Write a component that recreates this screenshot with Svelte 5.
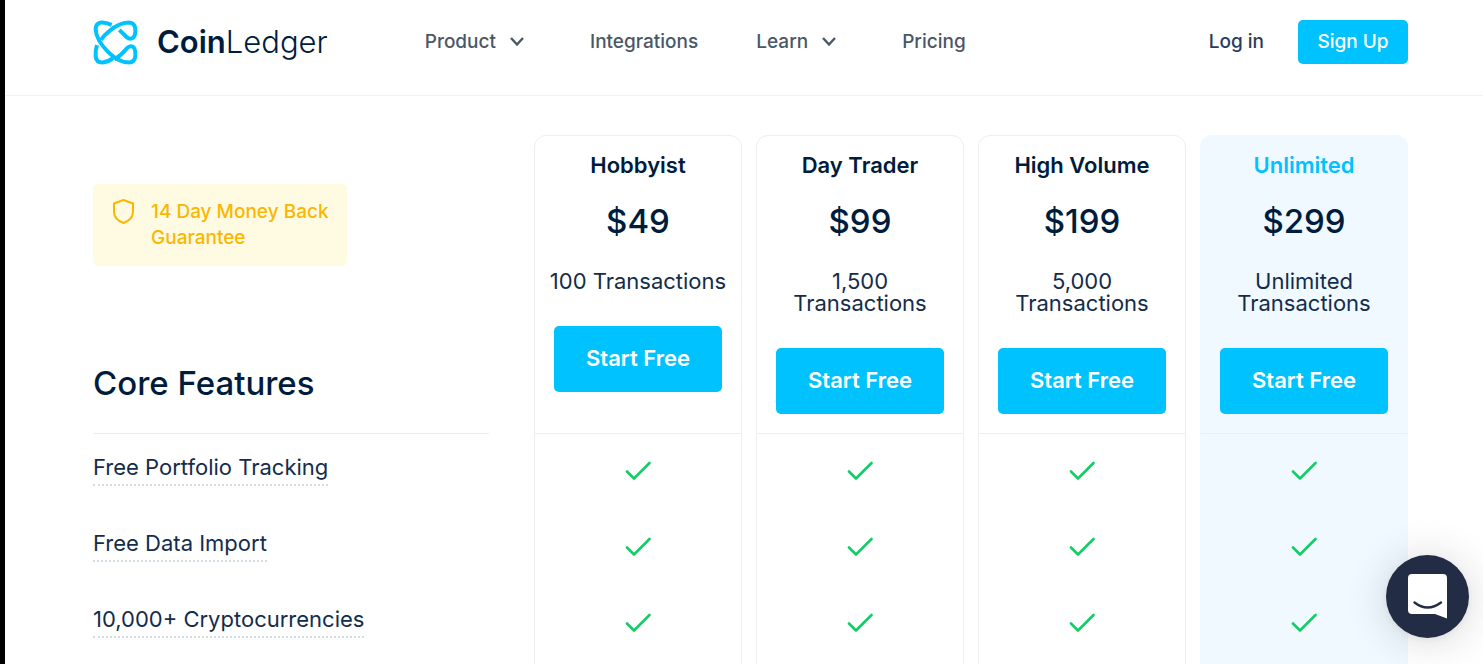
<script lang="ts">
  type NavItem = { label: string; menu?: boolean };
  type Plan = { name: string; price: string; volume: string; featured?: boolean };

  const nav: NavItem[] = [
    { label: 'Product', menu: true },
    { label: 'Integrations' },
    { label: 'Learn', menu: true },
    { label: 'Pricing' },
  ];

  const plans: Plan[] = [
    { name: 'Hobbyist', price: '$49', volume: '100 Transactions' },
    { name: 'Day Trader', price: '$99', volume: '1,500 Transactions' },
    { name: 'High Volume', price: '$199', volume: '5,000 Transactions' },
    { name: 'Unlimited', price: '$299', volume: 'Unlimited Transactions', featured: true },
  ];

  const features = ['Free Portfolio Tracking', 'Free Data Import', '10,000+ Cryptocurrencies'];
</script>

<div class="page">
  <header>
    <a class="logo" href="/">
      <svg width="45" height="46" viewBox="-2 -4 135 137" fill="none" stroke="#00c2ff" stroke-width="12" aria-hidden="true">
        <path d="M77 28 L99 50 Q110 59 119 51 Q126 45 125 24 Q122 6 105 6 Q76 7 48 31 Q32 43 22 58" />
        <path d="M10 74 Q5 88 6 108 Q8 126 26 126 Q43 125 58 113" />
        <path d="M54 13 Q36 5 22 6 Q6 8 6 27 Q8 59 43 94 Q75 126 107 126 Q124 124 125 106 Q126 84 118 79 Q109 74 100 83 Q82 105 62 117" />
      </svg>
      <span class="wordmark"><b>Coin</b>Ledger</span>
    </a>
    <nav>
      {#each nav as item}
        {#if item.menu}
          <button class="nav-item menu">
            {item.label}
            <svg width="14" height="10" viewBox="0 0 14 10" fill="none" stroke="currentColor" stroke-width="2.4" aria-hidden="true">
              <path d="M1 1 L7 7.5 L13 1" />
            </svg>
          </button>
        {:else}
          <a class="nav-item" href="/{item.label.toLowerCase()}">{item.label}</a>
        {/if}
      {/each}
    </nav>
    <a class="login" href="/login">Log in</a>
    <a class="signup" href="/signup">Sign Up</a>
  </header>

  <main>
    <table>
      <colgroup>
        <col />
        {#each plans as plan}<col class="plan-col" />{/each}
      </colgroup>
      <thead>
        <tr>
          <th class="intro">
            <div class="guarantee">
              <svg width="22" height="26" viewBox="0 0 22 26" fill="none" stroke="currentColor" stroke-width="2" stroke-linejoin="round" aria-hidden="true">
                <path d="M10.5 1 L20 4.5 V12.5 C20 18 16 22 10.5 24 C5 22 1 18 1 12.5 V4.5 Z" />
              </svg>
              <span>14 Day Money Back Guarantee</span>
            </div>
            <h2>Core Features</h2>
          </th>
          {#each plans as plan}
            <th class="plan" class:featured={plan.featured} scope="col">
              <div class="name">{plan.name}</div>
              <div class="price">{plan.price}</div>
              <div class="volume">{plan.volume}</div>
              <a class="start" href="/signup">Start Free</a>
            </th>
          {/each}
        </tr>
      </thead>
      <tbody>
        {#each features as feature}
          <tr>
            <th class="feature" scope="row"><span>{feature}</span></th>
            {#each plans as plan}
              <td class:featured={plan.featured}>
                <svg width="26" height="20" viewBox="0 0 26 20" fill="none" stroke="#13ce66" stroke-width="2.6" stroke-linecap="round" stroke-linejoin="round" role="img" aria-label="Included">
                  <path d="M2 10.5 L9 17.5 L24.5 2" />
                </svg>
              </td>
            {/each}
          </tr>
        {/each}
      </tbody>
    </table>
  </main>

  <button class="chat" aria-label="Open chat">
    <svg width="40" height="45" viewBox="0 0 40 45" aria-hidden="true">
      <path fill="#fff" d="M4 0 H35 Q39 0 39 4 V44.5 L27 40 H4 Q0 40 0 36 V4 Q0 0 4 0 Z" />
      <path fill="none" stroke="#222c44" stroke-width="2.4" stroke-linecap="round" d="M6.5 28.5 Q19.5 38.5 33 28.5" />
    </svg>
  </button>
</div>

<style>
  :global(body) { margin: 0; }
  .page {
    min-height: 100vh;
    box-sizing: border-box;
    border-left: 5px solid #000;
    background: #fff;
    color: #001c3d;
    font-family: Inter, sans-serif;
    font-size: 22px;
    line-height: 22px;
  }
  a { color: inherit; text-decoration: none; }
  button { border: none; background: none; font: inherit; color: inherit; padding: 0; cursor: pointer; }

  header {
    display: flex;
    align-items: center;
    padding: 20px 75px 31px 88px;
    border-bottom: 1px solid #f2f2f2;
    font-size: 19px;
    font-weight: 500;
  }
  .logo { display: flex; align-items: center; gap: 19px; height: 44px; }
  .wordmark { font-size: 31px; line-height: 44px; font-weight: 300; }
  .wordmark b { font-weight: 600; }
  nav { display: flex; gap: 58px; margin-left: 97px; flex: 1; color: #4a5766; }
  .menu { display: flex; align-items: center; gap: 14px; padding-right: 8px; }
  .login { margin-right: 34px; color: #2a3c59; }
  .signup {
    box-sizing: border-box;
    width: 110px;
    padding: 11px 0;
    border-radius: 5px;
    background: #00c2ff;
    color: #fff;
    text-align: center;
  }

  main { padding: 39px 61px 0 74px; }
  table { width: 100%; table-layout: fixed; border-collapse: separate; border-spacing: 14px 0; }
  .plan-col { width: 208px; }
  th, td { padding: 0; vertical-align: top; font-weight: 400; }
  .intro { text-align: left; padding: 49px 31px 0 0; }
  .guarantee {
    display: flex;
    gap: 16px;
    box-sizing: border-box;
    width: 254px;
    padding: 15px 12px 15px 20px;
    border-radius: 5px;
    background: #fffae2;
    color: #fab700;
    font-size: 19px;
    line-height: 26px;
    font-weight: 500;
  }
  .guarantee svg { flex: none; }
  h2 {
    margin: 97px 0 0;
    padding-bottom: 30px;
    border-bottom: 1px solid #ebeced;
    font-size: 33px;
    line-height: 40px;
    font-weight: 500;
  }

  .plan, td { border: 1px solid #ebefef; }
  .plan { padding: 17px 10px 19px; border-radius: 12px 12px 0 0; }
  .name { font-weight: 600; line-height: 24px; }
  .price { margin: 24px 0 29px; font-size: 33px; line-height: 40px; font-weight: 500; }
  .volume, .feature { color: #142c4b; }
  .start {
    display: block;
    margin: 34px 9px 0;
    padding: 21px 0 23px;
    border-radius: 5px;
    background: #00c2ff;
    color: #fff;
    font-weight: 600;
  }
  .featured { background: #f0f9ff; border-color: #f0f9ff; }
  .plan.featured { border-bottom-color: #e6eff4; }
  .plan.featured .name { color: #00c2ff; }

  td { height: 76px; box-sizing: border-box; padding-top: 27px; border-width: 0 1px; text-align: center; }
  td svg { display: block; margin: 0 auto; }
  .feature { padding-top: 22px; text-align: left; }
  .feature span { display: inline-block; padding-bottom: 6px; border-bottom: 2px dotted #d3dbe3; }
  tbody tr:last-child td { height: 78px; }

  .chat {
    position: fixed;
    right: 14px;
    bottom: 26px;
    display: flex;
    align-items: center;
    justify-content: center;
    width: 83px;
    height: 83px;
    border-radius: 50%;
    background: #222c44;
    box-shadow: 0 2px 8px rgba(0, 0, 0, 0.06), 0 3px 44px rgba(0, 0, 0, 0.16);
  }
</style>
